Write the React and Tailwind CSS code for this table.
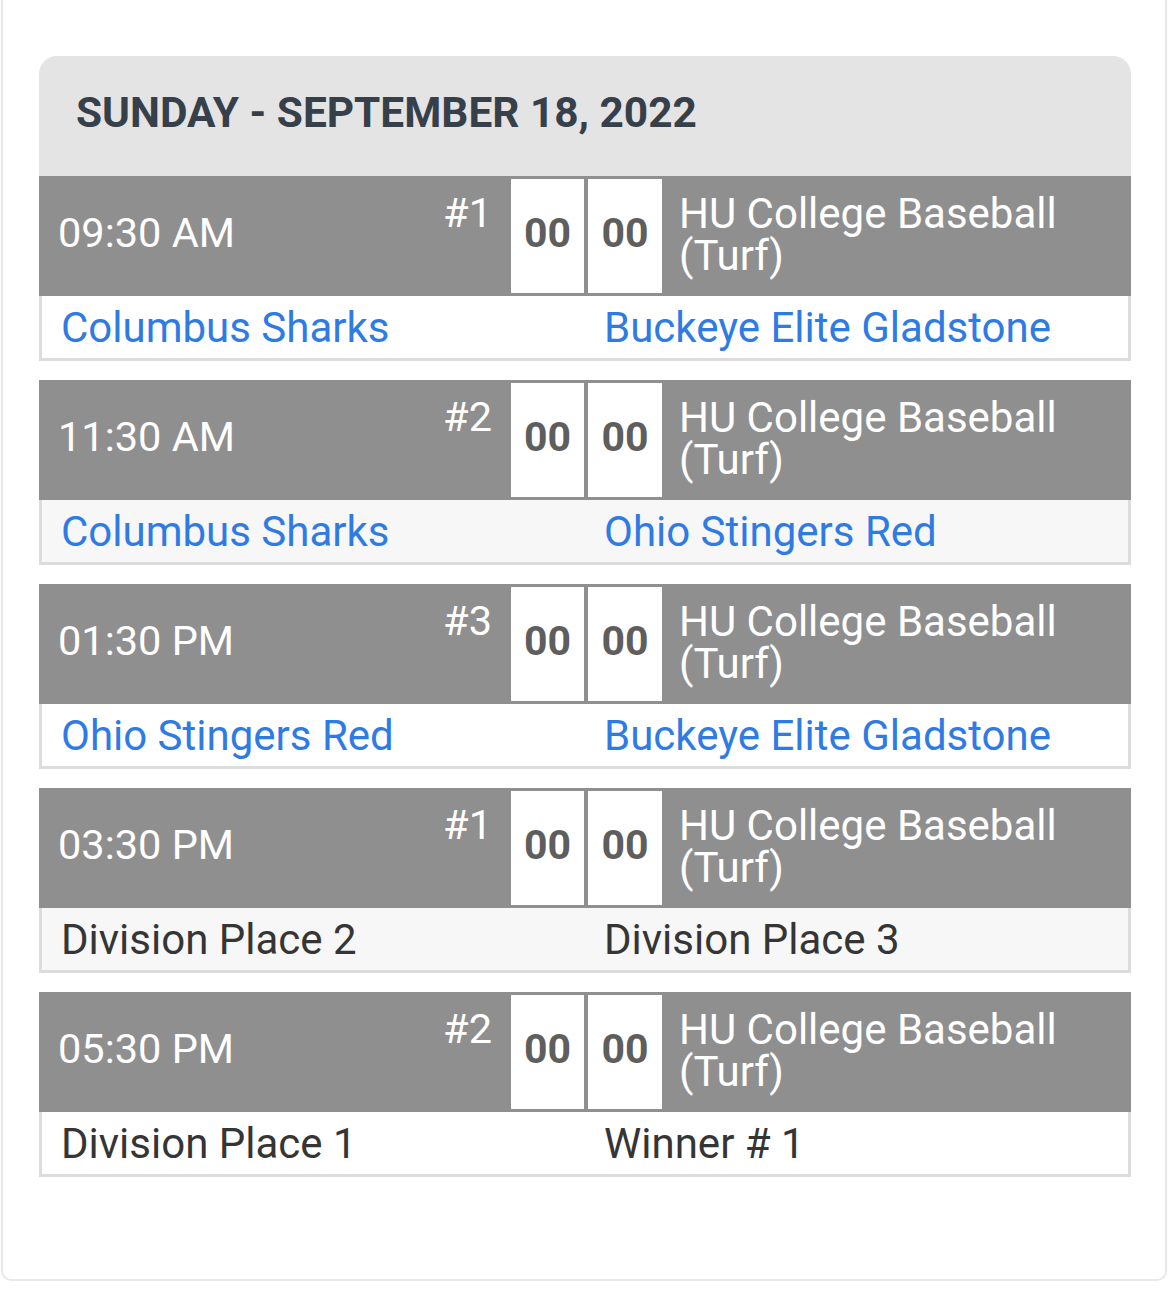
const games = [
  { time: '09:30 AM', num: '#1', home: 'Columbus Sharks', away: 'Buckeye Elite Gladstone', link: true },
  { time: '11:30 AM', num: '#2', home: 'Columbus Sharks', away: 'Ohio Stingers Red', link: true },
  { time: '01:30 PM', num: '#3', home: 'Ohio Stingers Red', away: 'Buckeye Elite Gladstone', link: true },
  { time: '03:30 PM', num: '#1', home: 'Division Place 2', away: 'Division Place 3', link: false },
  { time: '05:30 PM', num: '#2', home: 'Division Place 1', away: 'Winner # 1', link: false },
];

function GameCard({ game, striped }) {
  const teamClass = game.link ? 'text-[#2f7be4]' : 'text-[#353535]';
  return (
    <div>
      <div className="flex h-[120px] bg-[#8f8f8f]">
        <div className="flex w-[472px] justify-between pl-[19px] pr-[19px]">
          <span className="self-center pb-[5px] text-[41.5px] text-white">{game.time}</span>
          <span className="pt-[6px] text-[41.5px] text-white">{game.num}</span>
        </div>
        <div className="flex gap-[4px] py-[3px]">
          <div className="flex w-[73px] items-center justify-center bg-white pb-[4px] text-[41px] font-bold text-[#5e5e5e]">00</div>
          <div className="flex w-[74px] items-center justify-center bg-white pb-[4px] text-[41px] font-bold text-[#5e5e5e]">00</div>
        </div>
        <div className="flex flex-1 items-center pl-[17px] pb-[2px] text-[42px] leading-[42px] text-white">
          HU College Baseball
          <br />
          (Turf)
        </div>
      </div>
      <div
        className={`grid h-[65px] grid-cols-2 border-x-[3px] border-b-[3px] border-[#dcdcdc] ${striped ? 'bg-[#f7f7f7]' : 'bg-white'}`}
      >
        <span className={`flex items-center pl-[19px] pb-[6px] text-[42px] ${teamClass}`}>{game.home}</span>
        <span className={`flex items-center pl-[19px] pb-[6px] text-[42px] ${teamClass}`}>{game.away}</span>
      </div>
    </div>
  );
}

export default function App() {
  return (
    <div className="min-h-[1289px] bg-white font-['Roboto',sans-serif]">
      <div className="ml-px w-[1166px] rounded-b-[10px] border-x-2 border-b-2 border-[#e9e9e9] pl-[36px] pr-[34px] pt-[56px] pb-[102px]">
        <div className="overflow-hidden rounded-t-[18px]">
          <div className="flex h-[120px] items-center bg-[#e4e4e4] pl-[37px] pb-[6px]">
            <h2 className="text-[42.4px] font-bold text-[#36404a]">SUNDAY - SEPTEMBER 18, 2022</h2>
          </div>
          <div className="flex flex-col gap-[19px]">
            {games.map((g, i) => (
              <GameCard key={i} game={g} striped={i % 2 === 1} />
            ))}
          </div>
        </div>
      </div>
    </div>
  );
}
